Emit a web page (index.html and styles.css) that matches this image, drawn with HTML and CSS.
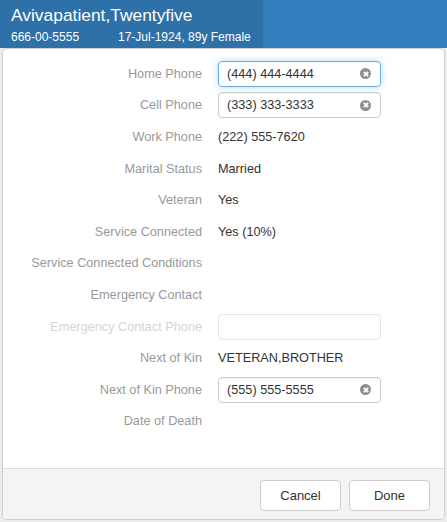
FILE: index.html
```html
<!DOCTYPE html>
<html>
<head>
<meta charset="utf-8">
<link rel="stylesheet" href="styles.css">
</head>
<body>
<header class="topbar">
  <div class="patient">
    <div class="pname">Avivapatient,Twentyfive</div>
    <div class="pmeta"><span class="ssn">666-00-5555</span><span>17-Jul-1924, 89y Female</span></div>
  </div>
</header>
<div class="modal">
  <div class="modal-body">
    <div class="row"><div class="label">Home Phone</div><div class="field focus"><span>(444) 444-4444</span><i class="clear"></i></div></div>
    <div class="row"><div class="label">Cell Phone</div><div class="field"><span>(333) 333-3333</span><i class="clear"></i></div></div>
    <div class="row"><div class="label">Work Phone</div><div class="value">(222) 555-7620</div></div>
    <div class="row"><div class="label">Marital Status</div><div class="value">Married</div></div>
    <div class="row"><div class="label">Veteran</div><div class="value">Yes</div></div>
    <div class="row"><div class="label">Service Connected</div><div class="value">Yes (10%)</div></div>
    <div class="row"><div class="label">Service Connected Conditions</div><div class="value"></div></div>
    <div class="row"><div class="label">Emergency Contact</div><div class="value"></div></div>
    <div class="row"><div class="label disabled">Emergency Contact Phone</div><div class="field empty"></div></div>
    <div class="row"><div class="label">Next of Kin</div><div class="value">VETERAN,BROTHER</div></div>
    <div class="row"><div class="label">Next of Kin Phone</div><div class="field"><span>(555) 555-5555</span><i class="clear"></i></div></div>
    <div class="row"><div class="label">Date of Death</div><div class="value"></div></div>
  </div>
  <div class="modal-footer">
    <button class="btn">Cancel</button>
    <button class="btn">Done</button>
  </div>
</div>
</body>
</html>
```
FILE: styles.css
```css
* { box-sizing: border-box; }
html, body { margin: 0; padding: 0; }
body {
  background: #ececec;
  font-family: "Liberation Sans", Arial, sans-serif;
  font-size: 12.7px;
  color: #333;
  width: 447px;
  height: 522px;
  overflow: hidden;
}
.topbar {
  height: 48px;
  background: #337fbd;
  display: flex;
}
.patient {
  width: 263px;
  background: #2d71a8;
  color: #fff;
  padding: 5px 0 0 11px;
}
.pname {
  font-size: 17.4px;
  line-height: 20px;
}
.pmeta {
  margin-top: 5px;
  font-size: 12px;
  line-height: 14px;
  display: flex;
}
.ssn { width: 107px; }
.modal {
  margin-left: 2px;
  width: 443px;
  height: 472px;
  background: #fff;
  border: 1px solid #cfcfcf;
  border-radius: 5px;
  display: flex;
  flex-direction: column;
  overflow: hidden;
}
.modal-body {
  flex: 1;
  padding-top: 9px;
}
.row {
  height: 31.6px;
  display: flex;
  align-items: center;
}
.label {
  width: 199px;
  text-align: right;
  color: #999;
  margin-right: 16px;
  white-space: nowrap;
}
.label.disabled { color: #d4d4d4; }
.value { color: #333; }
.field {
  width: 163px;
  height: 26px;
  border: 1px solid #ccc;
  border-radius: 4px;
  display: flex;
  align-items: center;
  justify-content: space-between;
  padding: 0 8px 0 8px;
  color: #333;
  box-shadow: inset 0 1px 1px rgba(0,0,0,0.05);
}
.field.focus {
  border-color: #66afe9;
  box-shadow: inset 0 1px 1px rgba(0,0,0,0.05), 0 0 7px rgba(102,175,233,0.45);
}
.field.empty { border-color: #e6e6e6; box-shadow: none; }
.clear {
  width: 11px;
  height: 11px;
  border-radius: 50%;
  background: #8f8f8f;
  position: relative;
  margin-right: 1px;
}
.clear::before, .clear::after {
  content: "";
  position: absolute;
  left: 2.5px;
  top: 4.5px;
  width: 6px;
  height: 2px;
  background: #fff;
  transform: rotate(45deg);
}
.clear::after { transform: rotate(-45deg); }
.modal-footer {
  height: 51px;
  background: #f4f4f4;
  border-top: 1px solid #ddd;
  display: flex;
  justify-content: flex-end;
  align-items: flex-start;
  gap: 8px;
  padding: 11px 14px 0 0;
}
.btn {
  width: 81px;
  height: 31px;
  background: #fff;
  border: 1px solid #ccc;
  border-radius: 4px;
  font-family: "Liberation Sans", Arial, sans-serif;
  font-size: 13px;
  color: #333;
  padding: 0;
}
```
